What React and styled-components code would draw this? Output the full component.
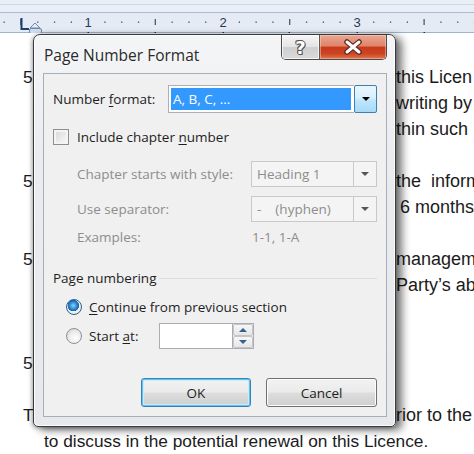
import React from 'react'
import styled, { createGlobalStyle } from 'styled-components'

const GlobalStyle = createGlobalStyle`
  html, body {
    margin: 0;
    padding: 0;
    background: #fff;
  }
`

const docLines = [
    { num: '5', right: 'this Licen' },
    { right: 'writing by' },
    { right: 'thin such' },
    {},
    { num: '5', right: 'the  inform' },
    { right: '6 months', indent: 4 },
    {},
    { num: '5', right: 'managem' },
    { right: 'Party\u2019s ab' },
    {},
    {},
    { num: '5' },
    {},
    { num: 'T', right: 'rior to the' },
]

const dots = Array.from({ length: 29 }, (_, i) => i)

const Ruler = () => (
    <RulerBar>
        <svg width="474" height="35" viewBox="0 0 474 35">
            <rect x="0" y="0" width="474" height="13" fill="#e9eff7" />
            <line x1="0" y1="4.5" x2="474" y2="4.5" stroke="#cdd8e6" />
            <line x1="0" y1="12.5" x2="474" y2="12.5" stroke="#a9bbd3" />
            <rect x="0" y="13" width="474" height="19" fill="#e4ebf5" />
            <line x1="0" y1="32.5" x2="474" y2="32.5" stroke="#9fb3cd" />
            {dots.map((i) => {
                const x = 4 + i * 16.8
                const k = i % 8
                if (k === 5) return null
                if (k === 1) return <rect key={i} x={x - 0.5} y="19" width="1.2" height="6" fill="#3a4d6a" />
                return <rect key={i} x={x - 0.5} y="21.5" width="1.3" height="1.3" fill="#3a4d6a" />
            })}
            {[['1', 88], ['2', 223], ['3', 357]].map(([n, x]) => (
                <text key={n} x={x} y="27" textAnchor="middle" fontFamily="Liberation Sans, Arial, sans-serif" fontSize="13" fill="#24395a">
                    {n}
                </text>
            ))}
            {[88, 155, 223, 289, 357, 424].map((x) => (
                <rect key={x} x={x - 0.5} y="32" width="1.5" height="2.5" fill="#2a2a2a" />
            ))}
            <path d="M21.5 18 V29 H29" fill="none" stroke="#1f3d74" strokeWidth="2" />
            <path d="M30 28 L35 23 L40 28 Z" fill="#e3ecf7" stroke="#6d86a8" />
            <rect x="29.5" y="28.5" width="12" height="5" rx="1.5" fill="#cfdcec" stroke="#6d86a8" />
        </svg>
    </RulerBar>
)

const Combo = ({ value, disabled }) => (
    <ComboBox $disabled={disabled}>
        <ComboField $disabled={disabled}>
            {disabled ? <FieldText>{value}</FieldText> : <Selection>{value}</Selection>}
        </ComboField>
        <DropButton $disabled={disabled}>
            <Arrow $disabled={disabled} />
        </DropButton>
    </ComboBox>
)

const App = () => {
    return (
        <>
            <GlobalStyle />
            <Page>
                <Ruler />
                <Document>
                    {docLines.map((l, i) => (
                        <DocLine key={i}>
                            <Num>{l.num || ''}</Num>
                            <span />
                            <RightText $indent={l.indent || 0}>{l.right || ''}</RightText>
                        </DocLine>
                    ))}
                    <LastLine>to discuss in the potential renewal on this Licence.</LastLine>
                </Document>

                <Dialog>
                    <TitleBar>
                        <Title>Page Number Format</Title>
                        <CaptionButtons>
                            <HelpButton>?</HelpButton>
                            <CloseButton>
                                <svg width="22" height="16" viewBox="0 0 22 16">
                                    <path d="M5 3 L17 13 M17 3 L5 13" stroke="#5b2a1f" strokeWidth="5.5" strokeLinecap="round" />
                                    <path d="M5 3 L17 13 M17 3 L5 13" stroke="#ffffff" strokeWidth="3" strokeLinecap="round" />
                                </svg>
                            </CloseButton>
                        </CaptionButtons>
                    </TitleBar>

                    <Panel>
                        <FormatRow>
                            <Label>
                                Number <U>f</U>ormat:
                            </Label>
                            <Combo value="A, B, C, ..." />
                        </FormatRow>

                        <CheckRow $mt={10}>
                            <CheckBox />
                            <Label>
                                Include chapter <U>n</U>umber
                            </Label>
                        </CheckRow>

                        <SubRow $mt={10}>
                            <Label $disabled>Chapter starts with style:</Label>
                            <Combo value="Heading 1" disabled />
                        </SubRow>
                        <SubRow $mt={9}>
                            <Label $disabled>Use separator:</Label>
                            <Combo value="-    (hyphen)" disabled />
                        </SubRow>
                        <SubRow $mt={2}>
                            <Label $disabled>Examples:</Label>
                            <Label $disabled $pad>1-1, 1-A</Label>
                        </SubRow>

                        <GroupHeader>
                            <Label>Page numbering</Label>
                            <GroupRule />
                        </GroupHeader>

                        <RadioRow $mt={6}>
                            <Radio $checked />
                            <Label>
                                <U>C</U>ontinue from previous section
                            </Label>
                        </RadioRow>
                        <RadioRow $mt={3}>
                            <Radio />
                            <RadioLabel>
                                Start <U>a</U>t:
                            </RadioLabel>
                            <SpinBox>
                                <SpinField />
                                <SpinButtons>
                                    <SpinHalf>
                                        <SpinArrow $up />
                                    </SpinHalf>
                                    <SpinHalf>
                                        <SpinArrow />
                                    </SpinHalf>
                                </SpinButtons>
                            </SpinBox>
                        </RadioRow>

                        <ButtonRow>
                            <PushButton $default>OK</PushButton>
                            <PushButton>Cancel</PushButton>
                        </ButtonRow>
                    </Panel>
                </Dialog>
            </Page>
        </>
    )
}

const Page = styled.div`
    position: relative;
    width: 474px;
    height: 454px;
    overflow: hidden;
    background: #fff;
`

const RulerBar = styled.div`
    height: 33px;
    overflow: hidden;
    svg {
        display: block;
    }
`

const Document = styled.div`
    padding-top: 31px;
    font-family: 'Liberation Sans', Arial, sans-serif;
    font-size: 17.3px;
    color: #1b1b1b;
`

const DocLine = styled.div`
    display: grid;
    grid-template-columns: 44px 352px 1fr;
    height: 26px;
    line-height: 26px;
    white-space: pre;
`

const Num = styled.span`
    padding-left: 23px;
`

const RightText = styled.span`
    padding-left: ${(p) => p.$indent}px;
    font-size: 18px;
`

const LastLine = styled.div`
    padding-left: 44px;
    height: 26px;
    line-height: 26px;
    white-space: nowrap;
`

const Dialog = styled.div`
    position: absolute;
    left: 33px;
    top: 34px;
    width: 363px;
    height: 393px;
    box-sizing: border-box;
    display: flex;
    flex-direction: column;
    border: 1px solid #3a3a3a;
    border-radius: 7px 7px 5px 5px;
    background: linear-gradient(180deg, #f4f5f7 0%, #eaecef 30%, #e6e8eb 100%);
    box-shadow: inset 0 0 0 1px rgba(255, 255, 255, 0.85), 6px 3px 9px rgba(0, 0, 0, 0.55),
        -1px 1px 4px rgba(0, 0, 0, 0.35);
    font-family: 'Open Sans', 'Noto Sans', sans-serif;
`

const TitleBar = styled.div`
    height: 38px;
    display: flex;
    justify-content: space-between;
    align-items: flex-start;
`

const Title = styled.div`
    margin: 10px 0 0 10px;
    font-size: 15.5px;
    line-height: 20px;
    color: #2a2a2a;
    text-shadow: 0 0 6px rgba(255, 255, 255, 0.9);
`

const CaptionButtons = styled.div`
    display: flex;
    margin-right: 8px;
    border: 1px solid #4b4b4b;
    border-top: none;
    border-radius: 0 0 5px 5px;
    overflow: hidden;
`

const HelpButton = styled.div`
    width: 37px;
    height: 24px;
    display: flex;
    align-items: center;
    justify-content: center;
    border-right: 1px solid #5a5a5a;
    background: linear-gradient(180deg, #f6f6f6 0%, #e4e4e4 48%, #cfcfcf 52%, #dadada 100%);
    box-shadow: inset 0 0 0 1px rgba(255, 255, 255, 0.7);
    font-family: 'DejaVu Sans', sans-serif;
    font-weight: bold;
    font-size: 18px;
    color: #fff;
    text-shadow: 1px 0 0 #555, -1px 0 0 #555, 0 1px 0 #555, 0 -1px 0 #555, 1px 1px 0 #555, -1px -1px 0 #555;
`

const CloseButton = styled.div`
    width: 66px;
    height: 24px;
    display: flex;
    align-items: center;
    justify-content: center;
    background: linear-gradient(180deg, #eaa793 0%, #df8468 45%, #c9391c 52%, #cd4423 78%, #e0774d 100%);
    box-shadow: inset 0 0 0 1px rgba(255, 220, 200, 0.45);
`

const Panel = styled.div`
    flex: 1;
    margin: 0 8px 9px 9px;
    box-sizing: border-box;
    padding: 11px 9px 0 9px;
    border: 1px solid #a7aeb6;
    background: #f0f0f0;
    display: flex;
    flex-direction: column;
    font-size: 13.5px;
    color: #1e1e1e;
`

const Label = styled.span`
    color: ${(p) => (p.$disabled ? '#8d8d8d' : '#1e1e1e')};
    padding-left: ${(p) => (p.$pad ? '1px' : '0')};
    white-space: nowrap;
`

const U = styled.span`
    text-decoration: underline;
    text-underline-offset: 2px;
`

const FormatRow = styled.div`
    display: grid;
    grid-template-columns: 115px 209px;
    align-items: center;
    height: 28px;
`

const ComboBox = styled.div`
    display: flex;
    height: 100%;
    box-sizing: border-box;
`

const ComboField = styled.div`
    flex: 1;
    display: flex;
    align-items: stretch;
    box-sizing: border-box;
    padding: 2px;
    border: 1px solid ${(p) => (p.$disabled ? '#c9c9c9' : '#a9b0ba')};
    border-right: none;
    background: ${(p) => (p.$disabled ? '#f4f4f4' : '#fff')};
`

const Selection = styled.div`
    flex: 1;
    margin-right: 1px;
    padding-left: 2px;
    display: flex;
    align-items: center;
    background: #3399ff;
    color: #fff;
`

const FieldText = styled.div`
    display: flex;
    align-items: center;
    padding-left: 3px;
    color: #8d8d8d;
    white-space: pre;
`

const DropButton = styled.div`
    width: ${(p) => (p.$disabled ? '24px' : '23px')};
    box-sizing: border-box;
    display: flex;
    align-items: center;
    justify-content: center;
    border: 1px solid ${(p) => (p.$disabled ? '#c9c9c9' : '#3c7fb1')};
    border-radius: ${(p) => (p.$disabled ? '0' : '2px')};
    background: ${(p) =>
        p.$disabled ? '#f4f4f4' : 'linear-gradient(180deg, #eaf6fd 0%, #d9f0fc 45%, #bee6fd 55%, #a7d9f5 100%)'};
`

const Arrow = styled.div`
    width: 0;
    height: 0;
    border-left: 4px solid transparent;
    border-right: 4px solid transparent;
    border-top: 4px solid ${(p) => (p.$disabled ? '#555' : '#000')};
`

const CheckRow = styled.div`
    display: flex;
    align-items: center;
    gap: 8px;
    height: 28px;
    margin-top: ${(p) => p.$mt}px;
`

const CheckBox = styled.div`
    width: 16px;
    height: 16px;
    box-sizing: border-box;
    border: 1px solid #8e8f8f;
    background: linear-gradient(135deg, #d6d6d6 0%, #ececec 60%, #fbfbfb 100%);
    box-shadow: inset 0 0 0 2px #f4f4f4;
`

const SubRow = styled.div`
    display: grid;
    grid-template-columns: 174px 126px;
    align-items: center;
    padding-left: 24px;
    height: 26px;
    margin-top: ${(p) => p.$mt}px;
`

const GroupHeader = styled.div`
    display: flex;
    align-items: center;
    gap: 3px;
    height: 20px;
    margin-top: 18px;
`

const GroupRule = styled.div`
    flex: 1;
    border-top: 1px solid #d5dfe5;
`

const RadioRow = styled.div`
    display: flex;
    align-items: center;
    gap: 7px;
    padding-left: 13px;
    height: 26px;
    margin-top: ${(p) => p.$mt}px;
`

const Radio = styled.div`
    width: 16px;
    height: 16px;
    box-sizing: border-box;
    border-radius: 50%;
    border: 1px solid ${(p) => (p.$checked ? '#2c628b' : '#8e8f8f')};
    background: ${(p) =>
        p.$checked
            ? 'radial-gradient(circle at 45% 40%, #8fd2f8 0%, #2d8fd8 30%, #1a5ea8 48%, #f4f4f4 52%, #dcdcdc 100%)'
            : 'radial-gradient(circle at 60% 65%, #ffffff 0%, #f0f0f0 40%, #d2d2d2 100%)'};
`

const RadioLabel = styled.span`
    width: 63px;
    white-space: nowrap;
`

const SpinBox = styled.div`
    display: flex;
    height: 26px;
`

const SpinField = styled.div`
    width: 73px;
    box-sizing: border-box;
    border: 1px solid #abadb3;
    border-right: none;
    background: #fff;
`

const SpinButtons = styled.div`
    width: 22px;
    display: flex;
    flex-direction: column;
    box-sizing: border-box;
    border: 1px solid #abadb3;
    background: #f2f2f2;
`

const SpinHalf = styled.div`
    flex: 1;
    display: flex;
    align-items: center;
    justify-content: center;
    border: 1px solid #c2c6cc;
    border-radius: 2px;
    background: linear-gradient(180deg, #f7f7f7 0%, #e6e6e6 100%);
`

const SpinArrow = styled.div`
    width: 0;
    height: 0;
    border-left: 4px solid transparent;
    border-right: 4px solid transparent;
    ${(p) => (p.$up ? 'border-bottom: 4px solid #3b5e8c;' : 'border-top: 4px solid #3b5e8c;')}
`

const ButtonRow = styled.div`
    display: flex;
    justify-content: flex-end;
    gap: 15px;
    margin-top: 29px;
`

const PushButton = styled.div`
    width: ${(p) => (p.$default ? '110px' : '111px')};
    height: 29px;
    box-sizing: border-box;
    display: flex;
    align-items: center;
    justify-content: center;
    border: 1px solid ${(p) => (p.$default ? '#3c7fb1' : '#707070')};
    border-radius: 3px;
    background: linear-gradient(180deg, #f2f2f2 0%, #ebebeb 48%, #dddddd 52%, #cfcfcf 100%);
    box-shadow: ${(p) => (p.$default ? 'inset 0 0 0 1px #5fc4f0, inset 0 0 0 2px #c8ecfb' : 'inset 0 0 0 1px #fcfcfc')};
    color: #1e1e1e;
`

export default App
